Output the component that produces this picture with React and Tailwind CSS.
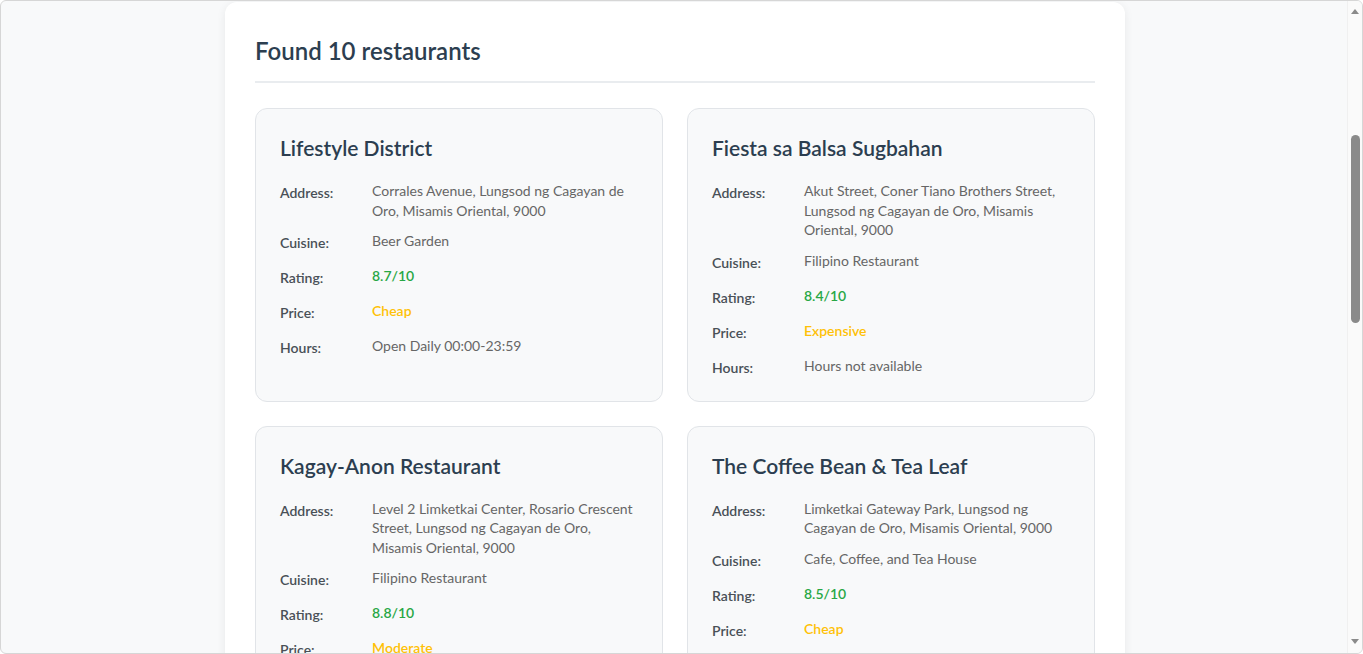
import React from 'react';

const restaurants = [
  {
    name: 'Lifestyle District',
    address: 'Corrales Avenue, Lungsod ng Cagayan de Oro, Misamis Oriental, 9000',
    cuisine: 'Beer Garden',
    rating: '8.7/10',
    price: 'Cheap',
    hours: 'Open Daily 00:00-23:59',
  },
  {
    name: 'Fiesta sa Balsa Sugbahan',
    address: 'Akut Street, Coner Tiano Brothers Street, Lungsod ng Cagayan de Oro, Misamis Oriental, 9000',
    cuisine: 'Filipino Restaurant',
    rating: '8.4/10',
    price: 'Expensive',
    hours: 'Hours not available',
  },
  {
    name: 'Kagay-Anon Restaurant',
    address: 'Level 2 Limketkai Center, Rosario Crescent Street, Lungsod ng Cagayan de Oro, Misamis Oriental, 9000',
    cuisine: 'Filipino Restaurant',
    rating: '8.8/10',
    price: 'Moderate',
    hours: 'Hours not available',
  },
  {
    name: 'The Coffee Bean & Tea Leaf',
    address: 'Limketkai Gateway Park, Lungsod ng Cagayan de Oro, Misamis Oriental, 9000',
    cuisine: 'Cafe, Coffee, and Tea House',
    rating: '8.5/10',
    price: 'Cheap',
    hours: 'Hours not available',
  },
];

const InfoRow = ({ label, children, valueClass = 'text-[#666]' }) => (
  <div className="flex items-start">
    <span className="w-[92px] shrink-0 text-[14px] leading-6 font-semibold text-[#495057]">{label}</span>
    <span className={`flex-1 text-[14px] leading-[19.5px] ${valueClass}`}>{children}</span>
  </div>
);

const RestaurantCard = ({ r }) => (
  <div className="bg-[#f8f9fa] border border-[#e1e4e8] rounded-xl px-6 pt-6 pb-[21px]">
    <h3 className="text-[21px] leading-[30px] font-semibold text-[#2c3e50] mb-[18px]">{r.name}</h3>
    <div className="flex flex-col gap-[11px]">
      <InfoRow label="Address:">{r.address}</InfoRow>
      <InfoRow label="Cuisine:">{r.cuisine}</InfoRow>
      <InfoRow label="Rating:" valueClass="text-[#28a745] font-semibold">{r.rating}</InfoRow>
      <InfoRow label="Price:" valueClass="text-[#ffc107] font-semibold">{r.price}</InfoRow>
      <InfoRow label="Hours:">{r.hours}</InfoRow>
    </div>
  </div>
);

const Scrollbar = () => (
  <div className="w-[15px] shrink-0 flex flex-col items-center bg-[#fafafa] border-l border-[#f0f0f0]">
    <div className="mt-[8px] w-0 h-0 border-l-[4.5px] border-r-[4.5px] border-b-[5px] border-l-transparent border-r-transparent border-b-[#8a8a8a]" />
    <div className="mt-[121px] w-[9px] h-[188px] rounded-full bg-[#8a8a8a]" />
    <div className="flex-1" />
    <div className="mb-[9px] w-0 h-0 border-l-[4.5px] border-r-[4.5px] border-t-[5px] border-l-transparent border-r-transparent border-t-[#8a8a8a]" />
  </div>
);

export default function App() {
  return (
    <div
      className="h-[654px] flex overflow-hidden bg-[#f8f9fa] border border-[#d6d6d6] rounded-md"
      style={{ fontFamily: 'Lato, "Open Sans", sans-serif' }}
    >
      <main className="flex-1 min-w-0 overflow-hidden pt-[1px] pl-[2px]">
        <section className="w-[900px] mx-auto bg-white rounded-xl shadow-[0_2px_10px_rgba(0,0,0,0.07)] p-[30px]">
          <h2 className="text-[24px] leading-[38px] font-semibold text-[#2c3e50] pb-[11px] border-b-2 border-[#e9ecef] mb-[25px]">
            Found 10 restaurants
          </h2>
          <div className="grid grid-cols-2 gap-6">
            {restaurants.map((r) => (
              <RestaurantCard key={r.name} r={r} />
            ))}
          </div>
        </section>
      </main>
      <Scrollbar />
    </div>
  );
}
